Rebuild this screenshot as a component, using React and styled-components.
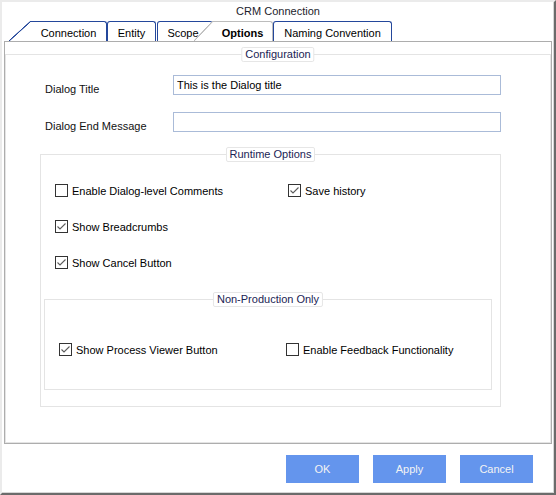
import React from 'react';
import styled, { createGlobalStyle, css } from 'styled-components';

const GlobalStyle = createGlobalStyle`
  html, body {
    margin: 0;
    padding: 0;
    background: #fff;
  }

  body {
    font-family: "Liberation Sans", Arial, sans-serif;
    font-size: 11px;
    color: #111;
  }
`;

const TAB_BLUE = '#24479b';
const TAB_GREY = '#bcbcbc';

const Window = styled.div`
  width: 556px;
  height: 495px;
  box-sizing: border-box;
  display: flex;
  flex-direction: column;
  background: #fff;
  border-top: 2px solid #ebebeb;
  border-left: 2px solid #ebebeb;
  border-right: 2px solid #6b6b6b;
  border-bottom: 2px solid #6b6b6b;
  box-shadow: inset -1px -1px 0 #d6d6d6;
`;

const Title = styled.div`
  height: 18px;
  line-height: 18px;
  text-align: center;
  color: #1c1c2c;
`;

const TabStrip = styled.div`
  display: flex;
  align-items: flex-end;
  height: 21px;
  padding-left: 29px;
`;

const Tab = styled.div`
  position: relative;
  box-sizing: border-box;
  width: ${p => p.$width}px;
  height: 20px;
  margin-left: ${p => p.$gap || 0}px;
  padding: 3px ${p => p.$padRight || 0}px 0 0;
  line-height: 16px;
  text-align: center;
  white-space: nowrap;
  background: #fff;
  color: #000;
  border: 1px solid ${p => (p.$active ? TAB_GREY : TAB_BLUE)};
  border-bottom: none;
  border-left-width: ${p => (p.$ear ? 0 : 1)}px;
  border-radius: ${p => (p.$ear ? '0 3px 0 0' : '3px 3px 0 0')};
  font-weight: ${p => (p.$active ? 700 : 400)};

  ${p =>
    p.$ear &&
    css`
      &::before {
        content: '';
        position: absolute;
        top: -1px;
        left: -${p.$ear}px;
        width: ${p.$ear}px;
        height: 20px;
        background: linear-gradient(
          to bottom right,
          transparent calc(50% - 0.8px),
          ${p.$active ? TAB_GREY : TAB_BLUE} calc(50% - 0.3px),
          ${p.$active ? TAB_GREY : TAB_BLUE} calc(50% + 0.3px),
          #fff calc(50% + 0.8px)
        );
      }
    `}
`;

const Panel = styled.div`
  box-sizing: border-box;
  height: 403px;
  margin: 0 2px;
  border: 1px solid #adadad;
`;

const GroupBox = styled.div`
  position: relative;
  box-sizing: border-box;
  border: 1px solid #e4e4e4;
`;

const Legend = styled.span`
  position: absolute;
  top: -8px;
  left: 50%;
  transform: translateX(-50%);
  box-sizing: border-box;
  height: 15px;
  padding: 0 3px;
  line-height: 13px;
  white-space: nowrap;
  background: #fff;
  border: 1px solid #e6e6e6;
  border-radius: 2px;
  color: #1b2454;
`;

const ConfigGroup = styled(GroupBox)`
  height: calc(100% - 12px);
  margin-top: 12px;
  padding-top: 20px;
`;

const FormRow = styled.div`
  display: flex;
  align-items: flex-start;
  height: 20px;
  padding-left: 39px;

  & + & {
    margin-top: 17px;
  }
`;

const FieldLabel = styled.label`
  width: 128px;
  margin-top: 8px;
  line-height: 13px;
  white-space: nowrap;
`;

const TextInput = styled.input`
  box-sizing: border-box;
  width: 328px;
  height: 20px;
  margin: 0;
  padding: 0 3px;
  border: 1px solid #aabbd8;
  border-radius: 0;
  outline: none;
  background: #fff;
  font: inherit;
  color: #000;
`;

const RuntimeGroup = styled(GroupBox)`
  width: 461px;
  margin: 22px 0 0 34px;
  padding: 29px 8px 16px 3px;
`;

const OptionGrid = styled.div`
  display: grid;
  grid-template-columns: ${p => p.$col}px auto;
  grid-auto-rows: 13px;
  row-gap: 23px;
  margin-left: ${p => p.$indent || 0}px;
`;

const NonProdGroup = styled(GroupBox)`
  width: 448px;
  margin-top: 30px;
  padding: 43px 0 33px 14px;
`;

const Option = styled.label`
  display: flex;
  align-items: center;
  gap: 4px;
  height: 13px;
  white-space: nowrap;
  color: #000;
`;

const Box = styled.span`
  display: flex;
  box-sizing: border-box;
  width: 13px;
  height: 13px;
  flex: none;
  border: 1px solid #333;
  background: #fff;
`;

const ButtonBar = styled.div`
  display: flex;
  justify-content: flex-end;
  gap: 14px;
  padding: 11px 21px 0 0;
`;

const Button = styled.button`
  width: 73px;
  height: 28px;
  margin: 0;
  padding: 0;
  border: none;
  background: #6495ed;
  color: #f3f3f3;
  font-family: "Liberation Sans", Arial, sans-serif;
  font-size: 11px;
`;

const Check = ({ checked, children }) => (
  <Option>
    <Box>
      {checked && (
        <svg width="11" height="11" viewBox="0 0 11 11">
          <polyline
            points="1.5,5.5 4,8 9.5,2.5"
            fill="none"
            stroke="#5c5c5c"
            strokeWidth="1.1"
          />
        </svg>
      )}
    </Box>
    {children}
  </Option>
);

const tabs = [
  { label: 'Connection', width: 76, ear: 22 },
  { label: 'Entity', width: 49 },
  { label: 'Scope', width: 56, gap: 1, padRight: 4 },
  { label: 'Options', width: 60, ear: 19, active: true },
  { label: 'Naming Convention', width: 119 }
];

const App = () => (
  <>
    <GlobalStyle />
    <Window>
      <Title>CRM Connection</Title>
      <TabStrip>
        {tabs.map(t => (
          <Tab
            key={t.label}
            $width={t.width}
            $ear={t.ear}
            $gap={t.gap}
            $padRight={t.padRight}
            $active={t.active}
          >
            {t.label}
          </Tab>
        ))}
      </TabStrip>

      <Panel>
        <ConfigGroup>
          <Legend>Configuration</Legend>
          <FormRow>
            <FieldLabel>Dialog Title</FieldLabel>
            <TextInput readOnly defaultValue="This is the Dialog title" />
          </FormRow>
          <FormRow>
            <FieldLabel>Dialog End Message</FieldLabel>
            <TextInput readOnly defaultValue="" />
          </FormRow>

          <RuntimeGroup>
            <Legend>Runtime Options</Legend>
            <OptionGrid $col={233} $indent={11}>
              <Check>Enable Dialog-level Comments</Check>
              <Check checked>Save history</Check>
              <Check checked>Show Breadcrumbs</Check>
              <span />
              <Check checked>Show Cancel Button</Check>
            </OptionGrid>

            <NonProdGroup>
              <Legend>Non-Production Only</Legend>
              <OptionGrid $col={227}>
                <Check checked>Show Process Viewer Button</Check>
                <Check>Enable Feedback Functionality</Check>
              </OptionGrid>
            </NonProdGroup>
          </RuntimeGroup>
        </ConfigGroup>
      </Panel>

      <ButtonBar>
        <Button>OK</Button>
        <Button>Apply</Button>
        <Button>Cancel</Button>
      </ButtonBar>
    </Window>
  </>
);

export default App;
